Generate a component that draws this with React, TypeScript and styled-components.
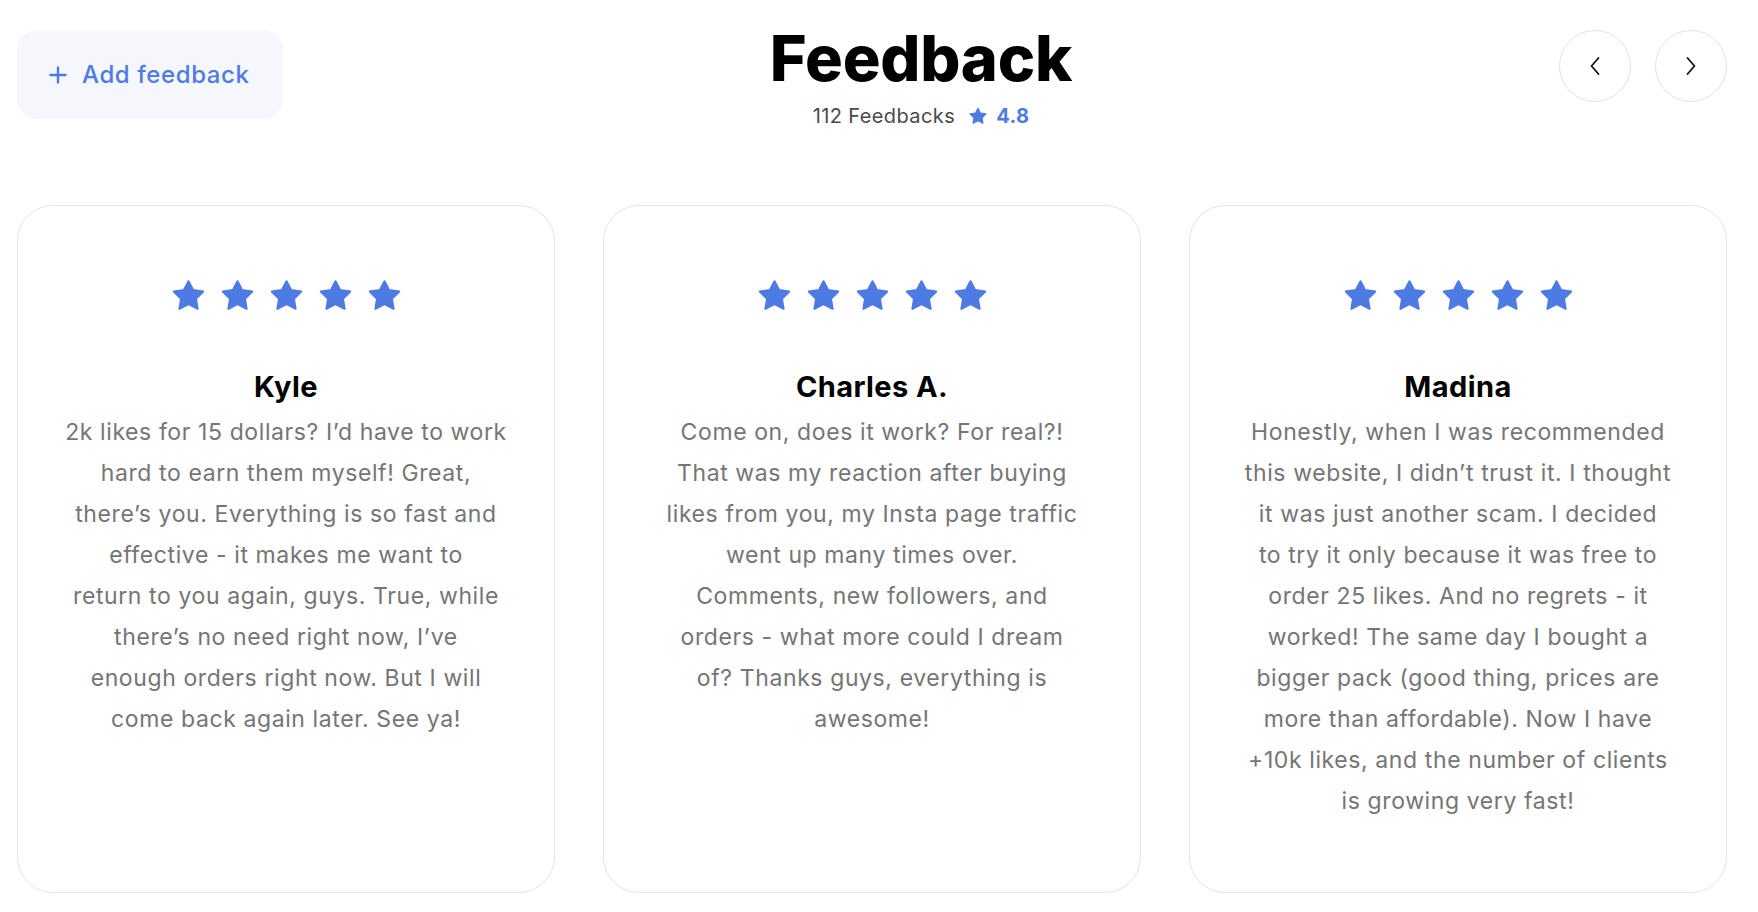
import React from "react";
import styled, { createGlobalStyle } from "styled-components";

const GlobalStyle = createGlobalStyle`
  html, body {
    margin: 0;
    padding: 0;
    background: #ffffff;
  }
  body {
    font-family: Inter, "Open Sans", "Noto Sans", sans-serif;
    -webkit-font-smoothing: antialiased;
  }
  * { box-sizing: border-box; }
`;

const BLUE = "#4e7be3";

const Page = styled.div`
  padding: 30px 31px 0 17px;
  display: flex;
  flex-direction: column;
`;

const Header = styled.header`
  display: flex;
  justify-content: space-between;
  align-items: flex-start;
`;

const AddButton = styled.button`
  display: flex;
  align-items: center;
  gap: 15px;
  height: 89px;
  width: 266px;
  padding: 0 0 0 32px;
  border: none;
  border-radius: 20px;
  background: #f5f7fd;
  color: ${BLUE};
  font-family: inherit;
  font-size: 24px;
  font-weight: 500;
  letter-spacing: 0.6px;
  cursor: pointer;
`;

const TitleBlock = styled.div`
  display: flex;
  flex-direction: column;
  align-items: center;
`;

const Title = styled.h1`
  margin: -4px 0 0;
  font-size: 63px;
  line-height: 64px;
  font-weight: 800;
  color: #000;
  letter-spacing: -0.2px;
`;

const Summary = styled.div`
  margin-top: 14px;
  display: flex;
  align-items: center;
  font-size: 20px;
  line-height: 24px;
  letter-spacing: 0.4px;
  color: #4a4a4a;
`;

const Rating = styled.span`
  display: flex;
  align-items: center;
  gap: 9px;
  margin-left: 14px;
  color: ${BLUE};
  font-weight: 700;
`;

const NavGroup = styled.div`
  display: flex;
  gap: 24px;
`;

const NavButton = styled.button`
  width: 72px;
  height: 72px;
  border-radius: 50%;
  border: 1px solid #e2e2e2;
  background: #fff;
  display: flex;
  align-items: center;
  justify-content: center;
  padding: 0;
  cursor: pointer;
`;

const CardGrid = styled.section`
  margin-top: 77px;
  display: grid;
  grid-template-columns: repeat(3, 1fr);
  gap: 48px;
`;

const Card = styled.article`
  height: 688px;
  border: 1px solid #e4e4e4;
  border-radius: 36px;
  padding-top: 73px;
  display: flex;
  flex-direction: column;
  align-items: center;
`;

const Stars = styled.div`
  display: flex;
  gap: 16px;
`;

const Name = styled.h3`
  margin: 58px 0 0;
  font-size: 29px;
  line-height: 34px;
  font-weight: 700;
  letter-spacing: 0.4px;
  color: #000;
`;

const Body = styled.p`
  margin: 8px 0 0;
  font-size: 23px;
  line-height: 41px;
  letter-spacing: 0.6px;
  color: #757575;
  text-align: center;
`;

const Line = styled.span`
  display: block;
  white-space: nowrap;
`;

const StarIcon = ({ size }: { size: number }) => (
  <svg width={size} height={size} viewBox="0 0 32 32" aria-hidden="true">
    <polygon
      points="16,2.2 20.47,10.65 30.27,12.16 23.23,19.15 24.82,28.94 16,24.4 7.18,28.94 8.77,19.15 1.73,12.16 11.53,10.65"
      fill={BLUE}
      stroke={BLUE}
      strokeWidth="2"
      strokeLinejoin="round"
    />
  </svg>
);

const PlusIcon = () => (
  <svg width="18" height="18" viewBox="0 0 18 18" aria-hidden="true">
    <path d="M9 1.5v15M1.5 9h15" stroke={BLUE} strokeWidth="2.4" strokeLinecap="round" />
  </svg>
);

const Chevron = ({ dir }: { dir: "left" | "right" }) => (
  <svg width="12" height="20" viewBox="0 0 12 20" aria-hidden="true">
    <path
      d={dir === "left" ? "M9.5 2 2.5 10l7 8" : "M2.5 2l7 8-7 8"}
      fill="none"
      stroke="#111"
      strokeWidth="1.8"
      strokeLinecap="round"
      strokeLinejoin="round"
    />
  </svg>
);

const reviews = [
  {
    name: "Kyle",
    lines: [
      "2k likes for 15 dollars? I’d have to work",
      "hard to earn them myself! Great,",
      "there’s you. Everything is so fast and",
      "effective - it makes me want to",
      "return to you again, guys. True, while",
      "there’s no need right now, I’ve",
      "enough orders right now. But I will",
      "come back again later. See ya!",
    ],
  },
  {
    name: "Charles A.",
    lines: [
      "Come on, does it work? For real?!",
      "That was my reaction after buying",
      "likes from you, my Insta page traffic",
      "went up many times over.",
      "Comments, new followers, and",
      "orders - what more could I dream",
      "of? Thanks guys, everything is",
      "awesome!",
    ],
  },
  {
    name: "Madina",
    lines: [
      "Honestly, when I was recommended",
      "this website, I didn’t trust it. I thought",
      "it was just another scam. I decided",
      "to try it only because it was free to",
      "order 25 likes. And no regrets - it",
      "worked! The same day I bought a",
      "bigger pack (good thing, prices are",
      "more than affordable). Now I have",
      "+10k likes, and the number of clients",
      "is growing very fast!",
    ],
  },
];

export default function App() {
  return (
    <>
      <GlobalStyle />
      <Page>
        <Header>
          <AddButton>
            <PlusIcon />
            Add feedback
          </AddButton>
          <TitleBlock>
            <Title>Feedback</Title>
            <Summary>
              112 Feedbacks
              <Rating>
                <StarIcon size={18} />
                4.8
              </Rating>
            </Summary>
          </TitleBlock>
          <NavGroup>
            <NavButton aria-label="Previous">
              <Chevron dir="left" />
            </NavButton>
            <NavButton aria-label="Next">
              <Chevron dir="right" />
            </NavButton>
          </NavGroup>
        </Header>
        <CardGrid>
          {reviews.map((r) => (
            <Card key={r.name}>
              <Stars>
                {[0, 1, 2, 3, 4].map((i) => (
                  <StarIcon key={i} size={33} />
                ))}
              </Stars>
              <Name>{r.name}</Name>
              <Body>
                {r.lines.map((l, i) => (
                  <Line key={i}>{l}</Line>
                ))}
              </Body>
            </Card>
          ))}
        </CardGrid>
      </Page>
    </>
  );
}
